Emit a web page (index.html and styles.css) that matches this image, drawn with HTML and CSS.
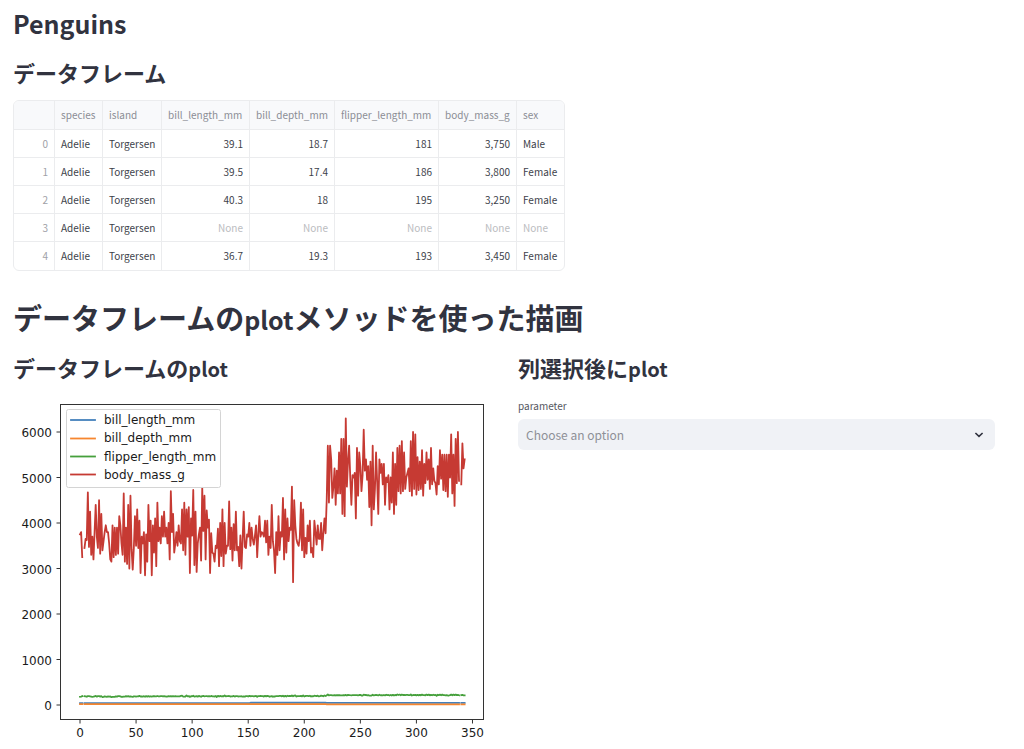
FILE: index.html
```
<!DOCTYPE html>
<html lang="ja">
<head>
    <meta charset="UTF-8">
    <meta name="viewport" content="width=device-width, initial-scale=1.0">
    <title>Penguins</title>
    <link rel="stylesheet" href="styles.css">
</head>
<body>

    <main class="app">
        <h2 class="title"><span class="latin">Penguins</span></h2>

        <h3 class="subheader">データフレーム</h3>
        <div class="dataframe">
            <table>
                <colgroup>
                    <col class="col-index">
                    <col class="col-species">
                    <col class="col-island">
                    <col class="col-bill-length">
                    <col class="col-bill-depth">
                    <col class="col-flipper">
                    <col class="col-mass">
                    <col class="col-sex">
                </colgroup>
                <thead>
                    <tr>
                        <th></th>
                        <th>species</th>
                        <th>island</th>
                        <th>bill_length_mm</th>
                        <th>bill_depth_mm</th>
                        <th>flipper_length_mm</th>
                        <th>body_mass_g</th>
                        <th>sex</th>
                    </tr>
                </thead>
                <tbody>
                    <tr>
                        <td class="index">0</td><td>Adelie</td><td>Torgersen</td>
                        <td class="num">39.1</td><td class="num">18.7</td><td class="num">181</td><td class="num">3,750</td>
                        <td>Male</td>
                    </tr>
                    <tr>
                        <td class="index">1</td><td>Adelie</td><td>Torgersen</td>
                        <td class="num">39.5</td><td class="num">17.4</td><td class="num">186</td><td class="num">3,800</td>
                        <td>Female</td>
                    </tr>
                    <tr>
                        <td class="index">2</td><td>Adelie</td><td>Torgersen</td>
                        <td class="num">40.3</td><td class="num">18</td><td class="num">195</td><td class="num">3,250</td>
                        <td>Female</td>
                    </tr>
                    <tr>
                        <td class="index">3</td><td>Adelie</td><td>Torgersen</td>
                        <td class="num none">None</td><td class="num none">None</td><td class="num none">None</td><td class="num none">None</td>
                        <td class="none">None</td>
                    </tr>
                    <tr>
                        <td class="index">4</td><td>Adelie</td><td>Torgersen</td>
                        <td class="num">36.7</td><td class="num">19.3</td><td class="num">193</td><td class="num">3,450</td>
                        <td>Female</td>
                    </tr>
                </tbody>
            </table>
        </div>

        <h2 class="header">データフレームの<span class="latin">plot</span>メソッドを使った描画</h2>

        <div class="columns">
            <section>
                <h3 class="subheader">データフレームの<span class="latin">plot</span></h3>
                <svg class="chart" viewBox="0 0 477 354" role="img" aria-label="Line plot of the penguins data">
                    <g id="series" class="series"></g>
                    <rect class="frame" x="47.5" y="9.5" width="423" height="315"/>
                    <g id="ticks" class="ticks"></g>
                    <g class="legend">
                        <rect x="53.5" y="14.5" width="154" height="78" rx="2"/>
                        <path class="blue" d="M58 25H82"/>
                        <path class="orange" d="M58 43.5H82"/>
                        <path class="green" d="M58 61.5H82"/>
                        <path class="red" d="M58 79.5H82"/>
                        <text x="91" y="29">bill_length_mm</text>
                        <text x="91" y="47">bill_depth_mm</text>
                        <text x="91" y="66">flipper_length_mm</text>
                        <text x="91" y="84">body_mass_g</text>
                    </g>
                </svg>
            </section>

            <section>
                <h3 class="subheader">列選択後に<span class="latin">plot</span></h3>
                <label class="widget-label" for="parameter">parameter</label>
                <div class="selectbox">
                    <select id="parameter">
                        <option value="" selected>Choose an option</option>
                        <option>bill_length_mm</option>
                        <option>bill_depth_mm</option>
                        <option>flipper_length_mm</option>
                        <option>body_mass_g</option>
                    </select>
                    <svg class="chevron" viewBox="0 0 10 6" aria-hidden="true"><path d="M1.4 1L5 4.4L8.6 1"/></svg>
                </div>
            </section>
        </div>
    </main>

    <script src="chart.js"></script>
</body>
</html>
```
FILE: styles.css
```
* {
    box-sizing: border-box;
}

body {
    margin: 0;
    background-color: white;
    color: #31333f;
    font-family: "Noto Sans CJK JP", "Noto Sans", sans-serif;
}

.app {
    padding: 4px 29px 0 13px;
}

h2,
h3 {
    margin: 0;
    font-weight: bold;
    white-space: nowrap;
}

.title,
.header {
    font-size: 29px;
    line-height: 34px;
}

.title {
    margin-bottom: 18px;
}

.header {
    margin: 29px 0 17px;
}

.subheader {
    font-size: 22px;
    line-height: 28px;
    margin-bottom: 12px;
}

/* latin glyphs run large next to the kana */
.title .latin,
.header .latin {
    font-size: 25px;
}

.subheader .latin {
    font-size: 20px;
}

.dataframe {
    width: 552px;
    max-width: 100%;
    margin-top: 14px;
    border: 1px solid #ebecee;
    border-radius: 6px;
    overflow: hidden;
}

table {
    width: 100%;
    table-layout: fixed;
    border-collapse: separate;
    border-spacing: 0;
    font-size: 10px;
    line-height: 16px;
}

.col-index { width: 41px; }
.col-species { width: 48px; }
.col-island { width: 59px; }
.col-bill-length { width: 88px; }
.col-bill-depth { width: 85px; }
.col-flipper { width: 104px; }
.col-mass { width: 78px; }

th,
td {
    height: 28px;
    padding: 0 6px;
    border-right: 1px solid #ebecee;
    border-bottom: 1px solid #ebecee;
    font-weight: normal;
    text-align: left;
    white-space: nowrap;
}

th {
    height: 29px;
    background-color: #f8f9fb;
    color: #8b8d95;
}

td {
    color: #3d3f4a;
}

th:last-child,
td:last-child {
    border-right: none;
}

tbody tr:last-child td {
    border-bottom: none;
}

.num,
.index {
    text-align: right;
}

td.index {
    color: #a0a1a7;
}

td.none {
    color: #bbbcc0;
}

.columns {
    display: grid;
    grid-template-columns: 1fr 1fr;
    gap: 28px;
}

.chart {
    display: block;
    width: 100%;
    font-family: "DejaVu Sans", sans-serif;
    font-size: 12px;
    fill: #1a1a1a;
}

.series path,
.legend path {
    fill: none;
    stroke-width: 1.8;
    stroke-linejoin: round;
    stroke-linecap: square;
}

.chart .blue { stroke: #4380bb; }
.chart .orange { stroke: #f6862f; }
.chart .green { stroke: #46a03c; }
.chart .red { stroke: #c63a33; }

.frame {
    fill: none;
    stroke: #333;
}

.ticks path {
    stroke: #333;
}

.ticks .x-label {
    text-anchor: middle;
}

.ticks .y-label {
    text-anchor: end;
}

.legend rect {
    fill: white;
    fill-opacity: 0.8;
    stroke: #d4d4d4;
}

.widget-label {
    display: block;
    margin-bottom: 2px;
    font-size: 10px;
    line-height: 22px;
    color: #55575f;
}

.selectbox {
    position: relative;
}

.selectbox select {
    display: block;
    width: 100%;
    height: 31px;
    padding: 0 30px 0 8px;
    border: none;
    border-radius: 6px;
    background-color: #f0f2f6;
    color: #8e9097;
    font-family: inherit;
    font-size: 12px;
    appearance: none;
}

.chevron {
    position: absolute;
    top: 13px;
    right: 11px;
    width: 10px;
    height: 6px;
    fill: none;
    stroke: #31333f;
    stroke-width: 1.6;
    pointer-events: none;
}
```
FILE: chart.js
```
const NA = null;

const bodyMass = [
    3750,3800,3250,NA,3450,3650,3625,4675,3475,4250,3300,3700,3200,3800,4400,3700,3450,4500,3325,4200,
    3400,3600,3800,3950,3800,3800,3550,3200,3150,3950,3250,3900,3300,3900,3325,4150,3950,3550,3300,4650,
    3150,3900,3100,4400,3000,4600,3425,2975,3450,4150,3500,4300,3450,4050,2900,3700,3550,3800,2850,3750,
    3150,4400,3600,4050,2850,3950,3350,4100,3050,4450,3600,3900,3550,4150,3700,4250,3700,3900,3550,4000,
    3200,4700,3800,4200,3350,3550,3800,3500,3950,3600,3550,4300,3400,4450,3300,4300,3700,4350,2900,4100,
    3725,4725,3075,4250,2925,3550,3750,3900,3175,4775,3825,4600,3200,4275,3900,4075,2900,3775,3350,3325,
    3150,3500,3450,3875,3050,4000,3275,4300,3050,4000,3325,3500,3500,4475,3425,3900,3175,3975,3400,4250,
    3400,3475,3050,3725,3000,3650,4250,3475,3450,3750,3700,4000,
    3500,3900,3650,3525,3725,3950,3250,3750,4150,3700,3800,3775,3700,4050,3575,4050,3300,3700,3450,4400,
    3600,3400,2900,3800,3300,4150,3400,3800,3700,4550,3200,4300,3350,4100,3600,3900,3850,4800,2700,4500,
    3950,3650,3550,3500,3675,4450,3400,4300,3250,3675,3325,3950,3600,4050,3350,3450,3250,4050,3800,3525,
    3950,3650,3650,4000,3400,3775,4100,3775,
    4500,5700,4450,5700,5400,4550,4800,5200,4400,5150,4650,5550,4650,5850,4200,5850,4150,6300,4800,5350,
    5700,5000,4400,5050,5000,5100,4100,5650,4600,5550,5250,4700,5050,6050,5150,5400,4950,5250,4350,5350,
    3950,5700,4300,4750,5550,4900,4200,5400,5100,5300,4850,5300,4400,5000,4900,5050,4300,5000,4450,5550,
    4200,5300,4400,5650,4700,5700,4650,5800,4700,5550,4750,5000,5100,5200,4700,5800,4600,6000,4750,5950,
    4625,5450,4725,5350,4750,5600,4600,5300,4875,5550,4950,5400,4750,5650,4850,5200,4925,4875,4625,5250,
    4850,5600,4975,5500,4725,5500,4700,5500,4575,5500,5000,5950,4650,5500,4375,5850,4875,6000,4925,NA,
    4850,5750,5200,5400
];

const flipperLength = [
    181,186,195,NA,193,190,181,195,193,190,186,180,182,191,198,185,195,197,184,194,174,180,189,185,180,
    187,183,187,172,180,178,178,188,184,195,196,190,180,181,184,182,195,186,196,185,190,182,179,190,191,
    186,188,190,200,187,191,186,193,181,194,185,195,185,192,184,192,195,188,190,198,190,190,196,197,190,
    195,191,184,187,195,189,196,187,193,191,194,190,189,189,190,202,205,185,186,187,208,190,196,178,192,
    192,203,183,190,193,184,199,190,181,197,198,191,193,197,191,196,188,199,189,189,187,198,176,202,186,
    199,191,195,191,210,190,197,193,199,187,190,191,200,185,193,193,187,188,190,192,185,190,184,195,193,
    187,201,
    192,196,193,188,197,198,178,197,195,198,193,194,185,201,190,201,197,181,190,195,181,191,187,193,195,
    197,200,200,191,205,187,201,187,203,195,199,195,210,192,205,210,187,196,196,196,201,190,212,187,198,
    199,201,193,203,187,197,191,203,202,194,206,189,195,207,202,193,210,198,
    211,230,210,218,215,210,211,219,209,215,214,216,214,213,210,217,210,221,209,222,218,215,213,215,215,
    215,216,215,210,220,222,209,207,230,220,220,213,219,208,208,208,225,210,216,222,217,210,225,213,215,
    210,220,210,225,217,220,208,220,208,224,208,221,214,231,219,230,214,229,220,223,216,221,221,217,216,
    230,209,220,215,223,212,221,212,224,212,228,218,218,212,230,218,228,212,224,214,226,216,222,203,225,
    219,228,215,228,216,215,210,219,208,209,216,229,213,230,217,230,217,222,214,NA,215,222,212,213
];

// bills are nearly flat at this scale, so one mean per species is enough
const bySpecies = (adelie, chinstrap, gentoo) => bodyMass.map((mass, i) => {
    if (mass === NA) return NA;
    return i < 152 ? adelie : i < 220 ? chinstrap : gentoo;
});

const x = (i) => 67 + i * 1.1214;
const y = (value) => 310 - value * 0.0455;

function linePath(values) {
    let d = '';
    let pen = 'M';
    values.forEach((value, i) => {
        if (value === NA) {
            pen = 'M';
            return;
        }
        d += `${pen}${x(i).toFixed(2)} ${y(value).toFixed(2)}`;
        pen = 'L';
    });
    return d;
}

const series = [
    ['blue', bySpecies(39, 49, 48)],
    ['orange', bySpecies(18, 18, 15)],
    ['green', flipperLength],
    ['red', bodyMass]
];

document.getElementById('series').innerHTML = series
    .map(([color, values]) => `<path class="${color}" d="${linePath(values)}"/>`)
    .join('');

let ticks = '';
for (let value = 0; value <= 350; value += 50) {
    ticks += `<path d="M${x(value)} 324.5v4"/><text class="x-label" x="${x(value)}" y="342">${value}</text>`;
}
for (let value = 0; value <= 6000; value += 1000) {
    ticks += `<path d="M47.5 ${y(value)}h-4"/><text class="y-label" x="39" y="${y(value) + 5}">${value}</text>`;
}
document.getElementById('ticks').innerHTML = ticks;
```
